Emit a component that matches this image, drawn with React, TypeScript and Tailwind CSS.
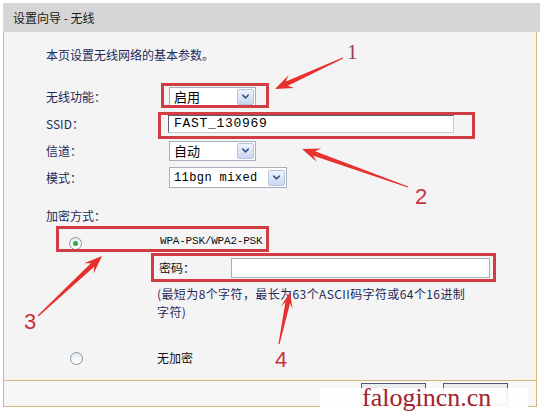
import { ChevronDown } from "lucide-react";

const cjk = "font-['Noto_Sans_CJK_SC',sans-serif]";
const mono = "font-['Liberation_Mono','Noto_Sans_CJK_SC',monospace]";

// tapered red arrow, computed from tail (x1,y1) to tip (x2,y2)
function arrow(x1: number, y1: number, x2: number, y2: number, head = 18, hw = 7) {
  const dx = x2 - x1;
  const dy = y2 - y1;
  const len = Math.hypot(dx, dy);
  const ux = dx / len;
  const uy = dy / len;
  const nx = -uy;
  const ny = ux;
  const wx = x2 - ux * head;
  const wy = y2 - uy * head;
  const jx = x2 - ux * (head - 5);
  const jy = y2 - uy * (head - 5);
  const pts = [
    [x1 + nx * 0.6, y1 + ny * 0.6],
    [jx + nx * 2.4, jy + ny * 2.4],
    [wx + nx * hw, wy + ny * hw],
    [x2, y2],
    [wx - nx * hw, wy - ny * hw],
    [jx - nx * 2.4, jy - ny * 2.4],
    [x1 - nx * 0.6, y1 - ny * 0.6],
  ];
  return pts.map((p) => p.join(",")).join(" ");
}

function Select({ value, width, text }: { value: string; width: string; text: string }) {
  return (
    <div className={`flex items-center justify-between ${width} h-[20px] border border-[#a7afbb] bg-white pl-[4px] pr-[1px]`}>
      <span className={text}>{value}</span>
      <span className="flex items-center justify-center w-[17px] h-[16px] rounded-[2px] border border-[#b5c5de] bg-gradient-to-b from-[#eef3fb] to-[#c9d8ef]">
        <ChevronDown size={11} strokeWidth={3.5} className="text-[#3c5a8f]" />
      </span>
    </div>
  );
}

function Radio({ checked }: { checked?: boolean }) {
  return (
    <span className="flex items-center justify-center w-[13px] h-[13px] rounded-full border border-[#8493a8] bg-gradient-to-b from-[#e6e9ee] to-white">
      {checked && <span className="w-[5px] h-[5px] rounded-full bg-[#34a844]" />}
    </span>
  );
}

function Row({ label, children }: { label: string; children: React.ReactNode }) {
  return (
    <div className="flex items-center h-[27px]">
      <span className="w-[123px] text-[12px] text-[#1d2a5c]">{label}</span>
      {children}
    </div>
  );
}

export default function App() {
  return (
    <div className={`relative w-[540px] h-[411px] overflow-hidden bg-white ${cjk}`}>
      {/* title bar */}
      <div className="mt-[3px] ml-[3px] h-[29px] bg-[#d6d6d6] flex items-center pl-[10px] text-[12px] text-[#1a1a1a]">
        设置向导 - 无线
      </div>

      {/* body */}
      <div className="mx-[3px] h-[349px] border-x border-b border-[#d7b67c] bg-[#f4f4f4] pl-[42px] pt-[15px] text-[#1d2a5c]">
        <p className="h-[16px] leading-[16px] text-[12px]">本页设置无线网络的基本参数。</p>

        <div className="mt-[20px]">
          <Row label="无线功能：">
            <Select value="启用" width="w-[87px]" text="text-[13px] text-black leading-none" />
          </Row>
          <Row label="SSID：">
            <div className="w-[286px] h-[18px] -ml-[1px] border border-[#59616b] border-b-[#c8ccd2] border-r-[#c8ccd2] bg-white flex items-center pl-[5px]">
              <span className={`${mono} text-[13px] tracking-[0.7px] text-black leading-none`}>FAST_130969</span>
            </div>
          </Row>
          <Row label="信道：">
            <Select value="自动" width="w-[87px]" text="text-[13px] text-black leading-none" />
          </Row>
          <Row label="模式：">
            <Select
              value="11bgn mixed"
              width="w-[118px] h-[21px]"
              text={`${mono} text-[12px] tracking-[0.4px] text-black leading-none`}
            />
          </Row>
        </div>

        <p className="mt-[17px] h-[16px] leading-[16px] text-[12px]">加密方式：</p>

        <div className="mt-[8px] flex items-center h-[18px]">
          <span className="ml-[23px] mt-[4px]">
            <Radio checked />
          </span>
          <span className={`ml-[78px] ${mono} text-[11px] tracking-[-0.2px] text-[#111]`}>WPA-PSK/WPA2-PSK</span>
        </div>

        <div className="mt-[8px] flex items-center h-[20px] pl-[113px]">
          <span className="w-[72px] text-[12px] text-[#111]">密码：</span>
          <div className="w-[259px] h-[20px] border border-[#a9b0ba] bg-white" />
        </div>

        <div className="mt-[7px] pl-[111px] text-[12px] leading-[18px] tracking-[0.4px] text-[#1d2a5c]">
          <p>(最短为8个字符，最长为63个ASCII码字符或64个16进制</p>
          <p>字符)</p>
        </div>

        <div className="mt-[28px] flex items-center h-[18px]">
          <span className="ml-[24px]">
            <Radio />
          </span>
          <span className="ml-[74px] text-[12px] text-[#111]">无加密</span>
        </div>
      </div>

      {/* button strip */}
      <div className="mx-[3px] h-[26px] border-x border-b border-[#d7b67c] bg-[#f7f7f7] flex items-start pt-[2px] pl-[357px] gap-[17px]">
        <span className="w-[65px] h-[22px] border border-[#4d5a68] bg-[#e8ecef]" />
        <span className="w-[65px] h-[22px] border border-[#4d5a68] bg-[#e8ecef]" />
      </div>

      {/* red annotation boxes */}
      <div className="absolute left-[161px] top-[83px] w-[108px] h-[25px] border-[3px] border-[#d23c43]" />
      <div className="absolute left-[158px] top-[112px] w-[317px] h-[27px] border-[3px] border-[#d23c43]" />
      <div className="absolute left-[56px] top-[226px] w-[213px] h-[26px] border-[3px] border-[#d23c43]" />
      <div className="absolute left-[151px] top-[253px] w-[345px] h-[29px] border-[3px] border-[#d23c43]" />

      {/* arrows */}
      <svg className="absolute inset-0 pointer-events-none" width="540" height="411">
        <polygon points={arrow(343, 58, 275, 89)} fill="#e8312f" />
        <polygon points={arrow(408, 187, 302, 149)} fill="#e8312f" />
        <polygon points={arrow(38, 316, 102, 256)} fill="#e8312f" />
        <polygon points={arrow(279, 344, 290, 292, 16, 6)} fill="#e8312f" />
      </svg>

      <span className="absolute left-[347px] top-[42px] text-[21px] leading-none font-['Liberation_Serif',serif] text-[#a23448]">1</span>
      <span className="absolute left-[415px] top-[186px] text-[22px] leading-none font-['Liberation_Sans',sans-serif] text-[#c9323c]">2</span>
      <span className="absolute left-[24px] top-[311px] text-[22px] leading-none font-['Liberation_Sans',sans-serif] text-[#c9323c]">3</span>
      <span className="absolute left-[275px] top-[349px] text-[22px] leading-none font-['Liberation_Sans',sans-serif] text-[#c9323c]">4</span>

      {/* watermark */}
      <div className="absolute left-[320px] top-[388px] w-[208px] h-[23px] bg-white/90 flex items-start justify-start pl-[42px]">
        <span className="text-[26px] leading-[20px] font-['Liberation_Serif',serif] text-[#a3222c]">falogincn.cn</span>
      </div>
    </div>
  );
}
